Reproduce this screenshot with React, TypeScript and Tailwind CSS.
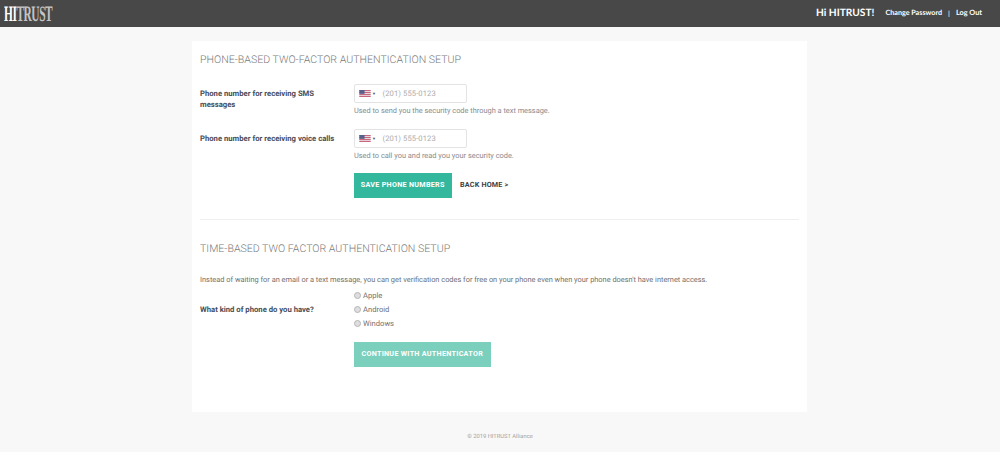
const sans = "font-['Roboto','Liberation_Sans',sans-serif]";

function Flag() {
  return (
    <svg width="12" height="7" viewBox="0 0 13 8" className="block shrink-0">
      <rect width="13" height="8" fill="#e8dfe3" />
      <rect y="0" width="13" height="1.2" fill="#c9667b" />
      <rect y="2.3" width="13" height="1.2" fill="#c9667b" />
      <rect y="4.6" width="13" height="1.2" fill="#c9667b" />
      <rect y="6.8" width="13" height="1.2" fill="#c9667b" />
      <rect width="6" height="4.4" fill="#5a5f8c" />
    </svg>
  );
}

function PhoneField({ label, help }: { label: React.ReactNode; help: string }) {
  return (
    <div className="flex">
      <div className="w-[154px] shrink-0 pr-2 pt-[4px] text-[7.7px] leading-[11px] font-bold text-[#474d58]">{label}</div>
      <div>
        <div className="flex h-[19px] w-[113px] items-center rounded-[2px] border border-[#e3e3e3] bg-white pl-[3.5px]">
          <Flag />
          <span className="ml-[1.5px] mr-[6.5px] w-[4px] text-[4px] leading-none text-[#555]">▼</span>
          <span className="text-[7.6px] tracking-[0.1px] text-[#adadad]">(201) 555-0123</span>
        </div>
        <p className="mt-[2px] text-[7.4px] leading-[11px] text-[#868b91]">{help}</p>
      </div>
    </div>
  );
}

function Radio({ label }: { label: string }) {
  return (
    <div className="flex h-[14px] items-center">
      <span className="mb-[2px] mr-[2px] h-[7px] w-[7px] rounded-full border border-[#b5b5b5] bg-[#dedede]" />
      <span className="text-[7.6px] text-[#727272]">{label}</span>
    </div>
  );
}

export default function App() {
  return (
    <div className={`flex h-[452px] flex-col overflow-hidden bg-[#f8f8f8] [text-rendering:geometricPrecision] ${sans}`}>
      <header className="flex h-[27px] shrink-0 items-center justify-between bg-[#484848] pl-[4px] pr-[18px]">
        <span className="origin-left scale-x-[0.52] font-['Liberation_Serif',serif] text-[22px] font-bold leading-none tracking-[-0.9px] text-[#c4c4c4]">
          <span className="text-white">HI</span>TRUST
        </span>
        <div className="flex items-center text-white">
          <span className="font-['Lato',sans-serif] text-[10.2px] font-bold">Hi HITRUST!</span>
          <span className="ml-[11px] font-['Lato',sans-serif] text-[7.2px] font-bold">Change Password</span>
          <span className="mx-[6px] text-[7.5px]">|</span>
          <span className="font-['Lato',sans-serif] text-[7.3px] font-bold">Log Out</span>
        </div>
      </header>

      <main className="ml-[192px] mt-[14px] h-[371px] w-[615px] shrink-0 bg-white px-[8px]">
        <h2 className="mt-[12px] text-[10.6px] font-light leading-[13px] text-[#7a7a7a]">
          PHONE-BASED TWO-FACTOR AUTHENTICATION SETUP
        </h2>
        <div className="mt-[18px] flex flex-col gap-[13px]">
          <PhoneField label={<>Phone number for receiving SMS messages</>} help="Used to send you the security code through a text message." />
          <PhoneField label="Phone number for receiving voice calls" help="Used to call you and read you your security code." />
        </div>
        <div className="ml-[154px] mt-[12px] flex items-center">
          <button className="h-[25px] w-[97.5px] bg-[#34b89d] text-[7.2px] font-bold tracking-[0.28px] text-white">SAVE PHONE NUMBERS</button>
          <a className="ml-[8.5px] text-[7.2px] font-bold tracking-[0.2px] text-[#3a3f47]">BACK HOME &gt;</a>
        </div>
        <hr className="mt-[21px] border-t border-[#efefef]" />
        <h2 className="mt-[22px] text-[10.6px] font-light leading-[13px] text-[#7a7a7a]">
          TIME-BASED TWO FACTOR AUTHENTICATION SETUP
        </h2>
        <p className="mt-[19px] text-[7.4px] leading-[11px] text-[#707070]">
          Instead of waiting for an email or a text message, you can get verification codes for free on your phone even when your phone doesn't have internet access.
        </p>
        <div className="mt-[4px] flex items-center">
          <div className="w-[154px] shrink-0 text-[7.7px] font-bold text-[#474d58]">What kind of phone do you have?</div>
          <div>
            <Radio label="Apple" />
            <Radio label="Android" />
            <Radio label="Windows" />
          </div>
        </div>
        <div className="ml-[154px] mt-[8px]">
          <button className="h-[25.5px] w-[136.5px] bg-[#7bd0bd] text-[7.2px] font-bold tracking-[0.28px] text-white">CONTINUE WITH AUTHENTICATOR</button>
        </div>
      </main>

      <footer className="mt-[21px] text-center text-[5.8px] leading-[9px] text-[#a3a3a3]">© 2019 HITRUST Alliance</footer>
    </div>
  );
}
